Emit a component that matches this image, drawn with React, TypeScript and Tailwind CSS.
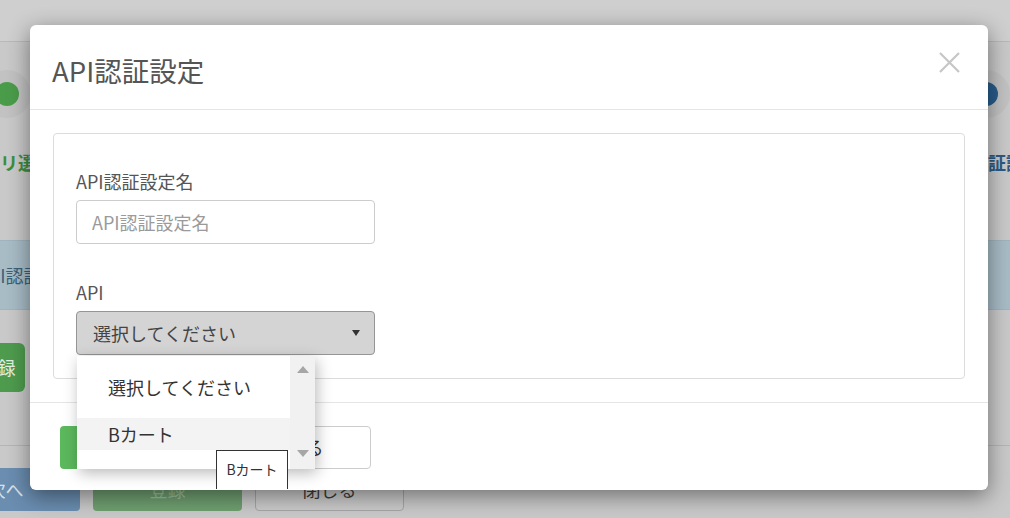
import React from 'react'

const FONT = "font-['Noto_Sans_CJK_JP','Noto_Sans',sans-serif]"

function Halo({ dot }: { dot: string }) {
  return (
    <div className="flex h-[48px] w-[48px] items-center justify-center rounded-full bg-[#c2c2c2]">
      <div className={`h-[24px] w-[24px] rounded-full ${dot}`} />
    </div>
  )
}

// dimmed page that sits behind the modal
function BackgroundPage() {
  return (
    <div className="flex h-full flex-col">
      <div className="h-[42px] shrink-0 border-b border-[#b9b9b9] bg-[#cfcfcf]" />
      <div className="ml-[-17px] mt-[28px] flex w-[1027px] justify-between">
        <Halo dot="bg-[#4a9c4a]" />
        <Halo dot="bg-[#285c8c]" />
      </div>
      <div className="mt-[32px] flex justify-between text-[18px] font-bold leading-[24px]">
        <span className="ml-[-54px] text-[#3e8e3e]">カテゴリ選択</span>
        <span className="mr-[-32px] text-[#2c5a84]">API認証設定</span>
      </div>
      <div className="mt-[66px] flex h-[70px] items-center border-y border-[#9fb4bf] bg-[#a8bcc6]">
        <span className="ml-[-22px] text-[18px] leading-[24px] text-[#3b6079]">API認証設定</span>
      </div>
      <div className="ml-[-30px] mt-[33px] flex h-[49px] w-[55px] items-center justify-center rounded-md bg-[#4e9b4e] text-[18px] text-[#e4efe4]">
        登録
      </div>
      <div className="mt-[53px] border-t border-[#b5b5b5]" />
      <div className="ml-[-69px] mt-[22px] flex gap-[13px] text-[18px]">
        <div className="flex h-[43px] w-[149px] items-center justify-center rounded bg-[#6a8db0] text-[#d7e1ea]">
          次へ
        </div>
        <div className="flex h-[43px] w-[149px] items-center justify-center rounded bg-[#6f9f70] text-[#9cc29c]">
          登録
        </div>
        <div className="flex h-[43px] w-[149px] items-center justify-center rounded border border-[#a6a6a6] bg-[#cbcbcb] text-[#3c3c3c]">
          閉じる
        </div>
      </div>
    </div>
  )
}

function Modal() {
  return (
    <div className="absolute left-[30px] top-[25px] h-[465px] w-[958px] rounded-md bg-white shadow-[0_6px_22px_rgba(0,0,0,0.45)]">
      <div className="flex h-[85px] items-start justify-between border-b border-[#e5e5e5] pl-[22px] pr-[28px]">
        <h1 className="mt-[28px] text-[27.5px] leading-[34px] text-[#555]">API認証設定</h1>
        <svg className="mt-[27px]" width="21" height="21" viewBox="0 0 21 21">
          <path d="M1 1 L20 20 M20 1 L1 20" stroke="#c6c6c6" strokeWidth="2.2" />
        </svg>
      </div>
      <div className="px-[23px] py-[23px]">
        <div className="rounded border border-[#dcdcdc] px-[22px] pb-[23px] pt-[35px]">
          <label className="block text-[18px] leading-[24px] text-[#555]">API認証設定名</label>
          <div className="mt-[7px] flex h-[44px] w-[299px] items-center rounded border border-[#cccccc] px-[15px] text-[18px] text-[#9a9a9a]">
            API認証設定名
          </div>
          <label className="mt-[36px] block text-[18px] leading-[24px] text-[#555]">API</label>
          <div className="mt-[7px] flex h-[44px] w-[299px] items-center justify-between rounded border border-[#959595] bg-[#d4d4d4] pl-[16px] pr-[14px] text-[18px] text-[#444]">
            <span>選択してください</span>
            <svg width="8" height="6" viewBox="0 0 8 6">
              <path d="M0 0 H8 L4 6 Z" fill="#333" />
            </svg>
          </div>
        </div>
      </div>
      <div className="flex gap-[13px] border-t border-[#e5e5e5] px-[30px] pt-[23px] text-[18px]">
        <div className="flex h-[43px] w-[149px] items-center justify-center rounded bg-[#5cb85c] text-white">
          登録
        </div>
        <div className="flex h-[43px] w-[149px] items-center justify-center rounded border border-[#cccccc] bg-white text-[#333]">
          閉じる
        </div>
      </div>
    </div>
  )
}

function Dropdown() {
  return (
    <div className="absolute left-[77px] top-[356px] flex h-[113px] w-[238px] bg-white text-[18px] text-[#333] shadow-[2px_4px_14px_rgba(0,0,0,0.28)]">
      <div className="flex-1">
        <div className="flex h-[62px] items-center pl-[31px]">選択してください</div>
        <div className="flex h-[32px] items-center bg-[#f3f3f3] pl-[31px]">Bカート</div>
      </div>
      <div className="flex w-[25px] flex-col items-center justify-between bg-[#f1f1f1] pb-[12px] pt-[10px]">
        <svg width="12" height="7" viewBox="0 0 12 7">
          <path d="M0 7 L6 0 L12 7 Z" fill="#a6a6a6" />
        </svg>
        <svg width="12" height="7" viewBox="0 0 12 7">
          <path d="M0 0 H12 L6 7 Z" fill="#a6a6a6" />
        </svg>
      </div>
    </div>
  )
}

export default function App() {
  return (
    <div className={`relative h-[518px] w-[1010px] overflow-hidden bg-[#c9c9c9] ${FONT}`}>
      <BackgroundPage />
      <Modal />
      <Dropdown />
      <div className="absolute left-[216px] top-[450px] flex h-[39px] w-[72px] items-center justify-center border border-b-0 border-[#333] bg-white pb-[1px] text-[14px] text-[#333]">
        Bカート
      </div>
    </div>
  )
}
